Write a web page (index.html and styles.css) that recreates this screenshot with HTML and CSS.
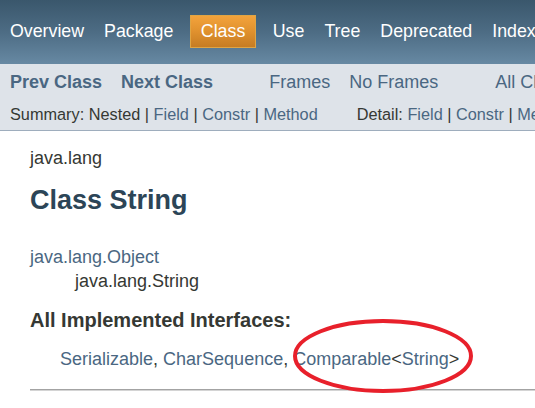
FILE: index.html
```html
<!DOCTYPE html>
<html>
<head>
<meta charset="utf-8">
<link rel="stylesheet" href="styles.css">
</head>
<body>
<div class="topnav">
  <a class="navitem">Overview</a>
  <a class="navitem">Package</a>
  <span class="navitem current">Class</span>
  <a class="navitem">Use</a>
  <a class="navitem">Tree</a>
  <a class="navitem">Deprecated</a>
  <a class="navitem">Index</a>
</div>
<div class="subnav">
  <div class="subrow1">
    <a class="strong">Prev Class</a>
    <a class="strong next">Next Class</a>
    <a class="frames">Frames</a>
    <a class="noframes">No Frames</a>
    <a class="allclasses">All Classes</a>
  </div>
  <div class="subrow2">
    <span class="summary">Summary:&nbsp;Nested&nbsp;|&nbsp;<a>Field</a>&nbsp;|&nbsp;<a>Constr</a>&nbsp;|&nbsp;<a>Method</a></span>
    <span class="detail">Detail:&nbsp;<a>Field</a>&nbsp;|&nbsp;<a>Constr</a>&nbsp;|&nbsp;<a>Method</a></span>
  </div>
</div>
<div class="content">
  <div class="pkg">java.lang</div>
  <h2 class="title">Class String</h2>
  <div class="inherit"><a>java.lang.Object</a></div>
  <div class="inherit2">java.lang.String</div>
  <div class="ifaces-label">All Implemented Interfaces:</div>
  <div class="ifaces"><a>Serializable</a>, <a>CharSequence</a>, <a>Comparable</a>&lt;<a>String</a>&gt;</div>
  <div class="rule"></div>
</div>
<svg class="mark" width="200" height="90" viewBox="0 0 200 90">
  <ellipse cx="90" cy="45" rx="88" ry="35" fill="none" stroke="#e8202b" stroke-width="4"/>
</svg>
</body>
</html>
```
FILE: styles.css
```css
html, body {
  margin: 0;
  padding: 0;
}
body {
  font-family: "Liberation Sans", Arial, sans-serif;
  color: #353833;
  background: #ffffff;
  width: 535px;
  height: 408px;
  overflow: hidden;
  position: relative;
  white-space: nowrap;
}
a {
  color: #4a6782;
  text-decoration: none;
}
.topnav {
  height: 64px;
  box-sizing: border-box;
  padding-top: 15px;
  background: linear-gradient(to bottom, #3a576c 0%, #4d6c84 50%, #6789a3 100%);
  display: flex;
  align-items: flex-start;
}
.navitem {
  color: #ffffff;
  font-size: 17.8px;
  line-height: 33px;
  height: 33px;
  padding: 0 10px;
  flex: none;
}
.navitem.current {
  margin: 0 7px;
  padding: 0 9.5px;
  box-sizing: border-box;
  line-height: 31px;
  border: 1px solid #e0a544;
  background: linear-gradient(to bottom, #f3a33c 0%, #e0912e 50%, #c67c23 100%);
}
.subnav {
  background: #dee3e9;
  border-bottom: 1px solid #9eadbd;
  height: 66px;
}
.subrow1 {
  display: flex;
  font-size: 18px;
  line-height: 33px;
  height: 33px;
  padding-left: 10px;
  padding-top: 2px;
  box-sizing: border-box;
}
.subrow1 a {
  flex: none;
}
.strong {
  font-weight: bold;
}
.next {
  margin-left: 19px;
}
.frames {
  margin-left: 56px;
}
.noframes {
  margin-left: 19px;
}
.allclasses {
  margin-left: 57px;
}
.subrow2 {
  display: flex;
  font-size: 16.3px;
  line-height: 33px;
  height: 33px;
  padding-left: 10px;
  padding-top: 1px;
  box-sizing: border-box;
}
.summary, .detail {
  flex: none;
}
.detail {
  margin-left: 39px;
}
.content {
  padding-left: 30px;
}
.pkg {
  font-size: 18px;
  line-height: 24px;
  margin-top: 15px;
}
.title {
  font-size: 27px;
  line-height: 34px;
  margin: 13px 0 0 0;
  color: #2c4557;
  font-weight: bold;
}
.inherit {
  font-size: 18px;
  line-height: 24px;
  margin-top: 28px;
}
.inherit2 {
  font-size: 18px;
  line-height: 24px;
  padding-left: 45px;
}
.ifaces-label {
  font-size: 20px;
  font-weight: bold;
  line-height: 26px;
  margin-top: 14px;
  color: #353833;
}
.ifaces {
  font-size: 18px;
  line-height: 24px;
  margin-top: 14px;
  padding-left: 30px;
}
.rule {
  margin-top: 18px;
  border-top: 1px solid #a3a3a3;
  height: 1px;
  background: #d4d4d4;
}
.mark {
  position: absolute;
  left: 293px;
  top: 311px;
}
```
